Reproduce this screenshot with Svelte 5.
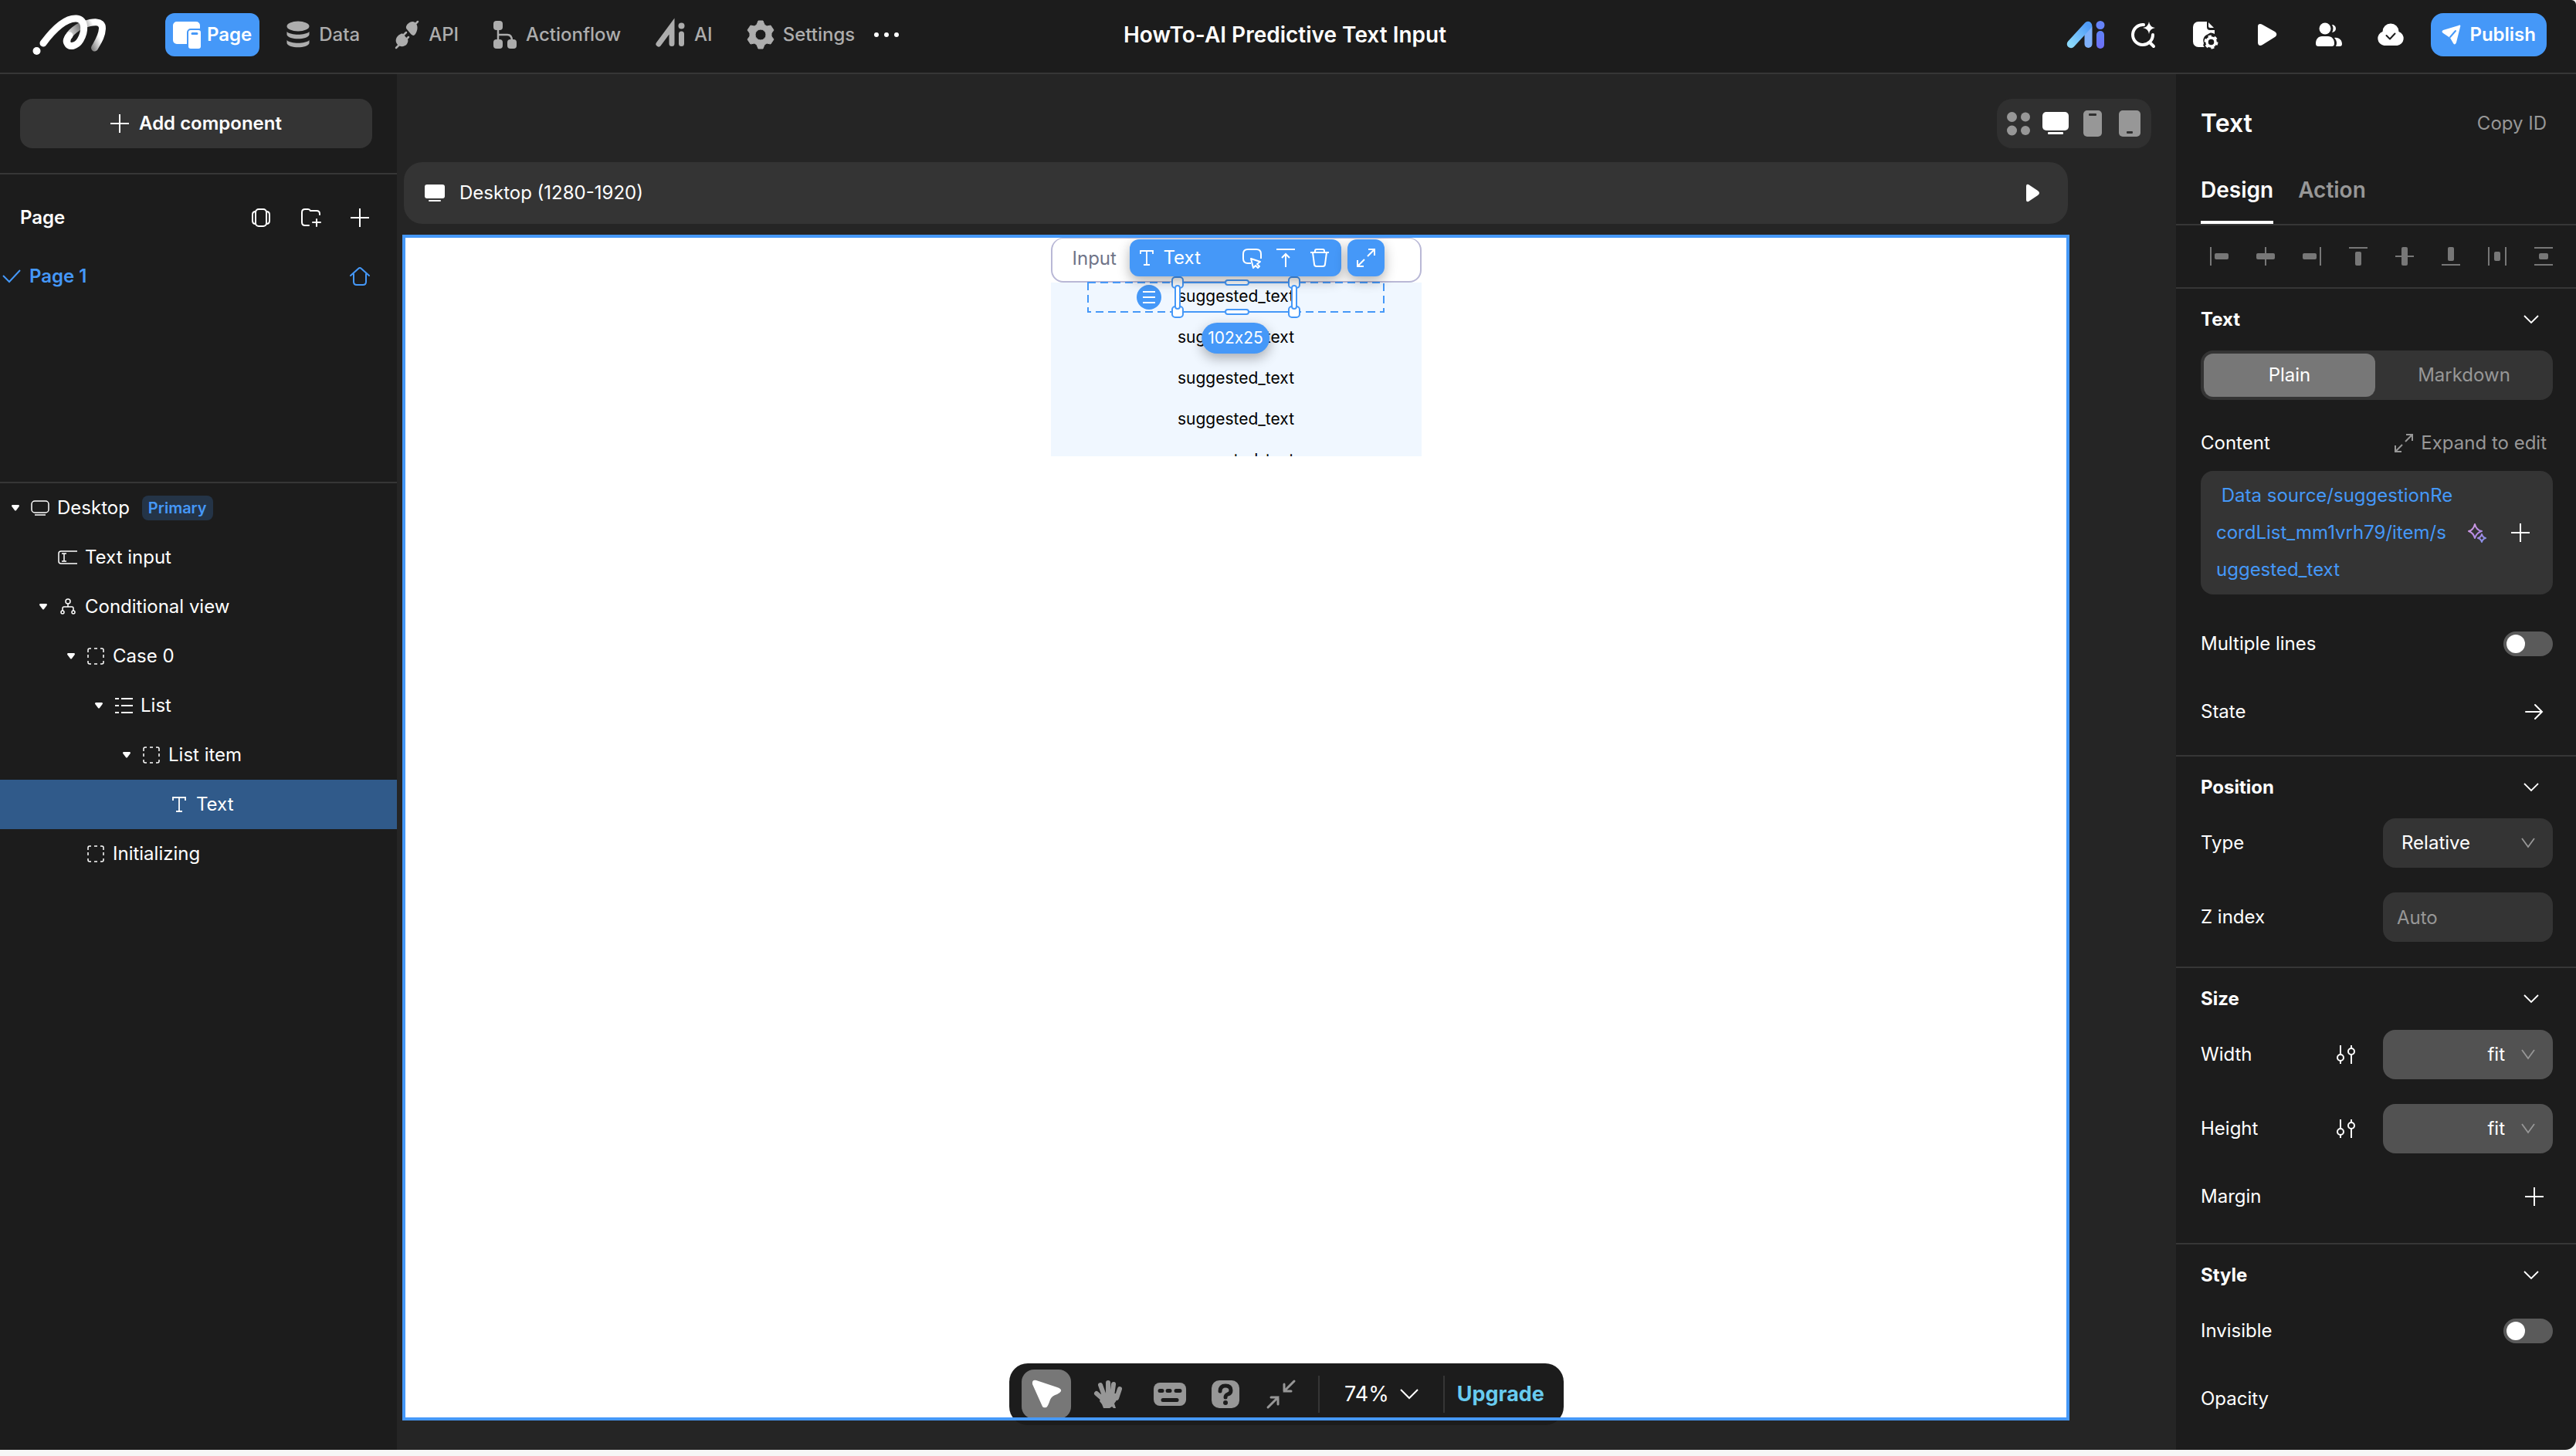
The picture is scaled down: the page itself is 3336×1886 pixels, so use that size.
<script lang="ts">
  type TreeRow = {
    label: string;
    icon: string;
    depth: number;
    open?: boolean;
    tag?: string;
    selected?: boolean;
  };

  const nav = [
    { label: 'Page', icon: 'page', active: true },
    { label: 'Data', icon: 'data' },
    { label: 'API', icon: 'plug' },
    { label: 'Actionflow', icon: 'flow' },
    { label: 'AI', icon: 'ai' },
    { label: 'Settings', icon: 'gear' },
  ];

  const actions = [
    { label: 'AI assistant', icon: 'aiColor' },
    { label: 'Smart search', icon: 'search' },
    { label: 'Page settings', icon: 'docGear' },
    { label: 'Preview', icon: 'play' },
    { label: 'Members', icon: 'users' },
    { label: 'Saved', icon: 'cloud' },
  ];

  const devices = [
    { label: 'All', icon: 'grid' },
    { label: 'Desktop', icon: 'monitor', active: true },
    { label: 'Phone', icon: 'phone' },
    { label: 'Tablet', icon: 'tablet' },
  ];

  const tree: TreeRow[] = [
    { label: 'Desktop', icon: 'screen', depth: 0, open: true, tag: 'Primary' },
    { label: 'Text input', icon: 'field', depth: 1 },
    { label: 'Conditional view', icon: 'branch', depth: 1, open: true },
    { label: 'Case 0', icon: 'box', depth: 2, open: true },
    { label: 'List', icon: 'list', depth: 3, open: true },
    { label: 'List item', icon: 'box', depth: 4, open: true },
    { label: 'Text', icon: 'type', depth: 5, selected: true },
    { label: 'Initializing', icon: 'box', depth: 2 },
  ];

  const aligns = [
    { label: 'Align left', d: 'M1 0v24', r: [6, 8, 18, 8] },
    { label: 'Align centre', d: 'M12 0v24', r: [0, 8, 24, 8] },
    { label: 'Align right', d: 'M23 0v24', r: [0, 8, 18, 8] },
    { label: 'Align top', d: 'M0 1h24', r: [8, 6, 8, 18] },
    { label: 'Align middle', d: 'M0 12h24', r: [8, 0, 8, 24] },
    { label: 'Align bottom', d: 'M0 23h24', r: [8, 0, 8, 18] },
    { label: 'Distribute horizontally', d: 'M1 0v24M23 0v24', r: [8, 6, 8, 12] },
    { label: 'Distribute vertically', d: 'M0 1h24M0 23h24', r: [6, 8, 12, 8] },
  ];

  const suggestions = Array(5).fill('suggested_text');
  const binding = ' Data source/suggestionRe\ncordList_mm1vrh79/item/s\nuggested_text';

  let multiline = $state(false);
  let invisible = $state(false);
</script>

{#snippet icon(name: string)}
  {#if name === 'page'}
    <svg width="36" height="36" viewBox="0 0 36 36" fill="currentColor">
      <path d="M5 1h25a5 5 0 0 1 5 5v4H23a5 5 0 0 0-5 5v15H5a5 5 0 0 1-5-5V6a5 5 0 0 1 5-5Z" />
      <path fill-rule="evenodd" d="M23 12h10a3 3 0 0 1 3 3v18a3 3 0 0 1-3 3H23a3 3 0 0 1-3-3V15a3 3 0 0 1 3-3Zm2 3a1 1 0 0 0 0 3h6a1 1 0 0 0 0-3Z" />
    </svg>
  {:else if name === 'data'}
    <svg width="30" height="36" viewBox="0 0 30 36" fill="currentColor">
      <ellipse cx="15" cy="7" rx="14.500" ry="6.500" />
      <path d="M.5 14c5 5 24 5 29 0v4c-2 7-27 7-29 0ZM.5 25c5 5 24 5 29 0v4c-2 7-27 7-29 0Z" />
    </svg>
  {:else if name === 'plug'}
    <svg width="32" height="36" viewBox="0 0 32 36" fill="currentColor">
      <path d="M26 5l4-4" stroke="currentColor" stroke-width="2.500" stroke-linecap="round" />
      <path d="M17 4c4-4 9-4 11 0 3 4 1 10-1 13-2 3-4 2-6 0l-5-6c-2-2-1-5 1-7Z" />
      <path d="M2 35l4-4M11 19l4-4M15 24l3-3" stroke="currentColor" stroke-width="2.500" stroke-linecap="round" />
      <path d="M8 17c2-1 3 0 4 1l5 6c1 2 0 4-1 6-3 4-9 4-12 1-4-4-3-11 4-14Z" />
    </svg>
  {:else if name === 'flow'}
    <svg width="30" height="36" viewBox="0 0 30 36" fill="currentColor">
      <rect width="12" height="12" rx="4" />
      <rect y="24" width="12" height="12" rx="4" />
      <rect x="18" y="24" width="12" height="12" rx="4" />
      <path d="M6 10v16M6 18h12q6 0 6 8" fill="none" stroke="currentColor" stroke-width="2.500" />
    </svg>
  {:else if name === 'ai'}
    <svg width="38" height="32" viewBox="0 0 38 32" fill="none" stroke="currentColor" stroke-width="7" stroke-linecap="round">
      <path d="M4 28 21 5v22.500M33.500 15v12.500" />
      <circle cx="33.500" cy="4.500" r="4" fill="currentColor" stroke="none" />
    </svg>
  {:else if name === 'gear'}
    <svg width="34" height="38" viewBox="0 0 34 38">
      <path fill="currentColor" fill-rule="evenodd" d="M14 1h6l2 5 3 2 5-1 4 6-3 4v4l3 4-4 6-5-1-3 2-2 5h-6l-2-5-3-2-5 1-4-6 3-4v-4l-3-4 4-6 5 1 3-2Zm3 11a7 7 0 1 0 0 14 7 7 0 0 0 0-14Z" stroke="currentColor" stroke-linejoin="round" />
    </svg>
  {:else if name === 'aiColor'}
    <svg width="50" height="36" viewBox="0 0 50 36" fill="none" stroke-linecap="round">
      <defs>
        <linearGradient id="ai-a" x1="0" y1="1" x2="1" y2="0">
          <stop stop-color="#8ad8fb" /><stop offset="1" stop-color="#4f9bf8" />
        </linearGradient>
        <linearGradient id="ai-b" x1="0" y1="0" x2="0" y2="1">
          <stop stop-color="#5f83f8" /><stop offset="1" stop-color="#6f6ef6" />
        </linearGradient>
      </defs>
      <path d="M28.500 8v22" stroke="#7fb0fa" stroke-width="10" />
      <path d="M6 30 28 6" stroke="url(#ai-a)" stroke-width="10.500" />
      <rect x="39" y="13" width="10" height="23" rx="5" fill="url(#ai-b)" />
      <circle cx="44" cy="5.500" r="5.500" fill="#6683f8" />
    </svg>
  {:else if name === 'search'}
    <svg width="32" height="34" viewBox="0 0 32 34" fill="none" stroke="currentColor" stroke-width="4" stroke-linecap="round">
      <path d="M16 4A13 13 0 1 0 28 17M24 27l5 5" />
      <path d="M23 0q1 7 8 8-7 1-8 8-1-7-8-8 7-1 8-8Z" fill="currentColor" stroke="none" />
    </svg>
  {:else if name === 'docGear'}
    <svg width="32" height="36" viewBox="0 0 32 36" fill="currentColor">
      <path d="M7 1h11v7a4 4 0 0 0 4 4h6v5c-3-2-6-2-8 0-6 2-8 7-6 12-1 2-1 4 1 5H7a7 7 0 0 1-7-7V8a7 7 0 0 1 7-7Z" />
      <path d="M20 2l7 7h-5a2 2 0 0 1-2-2Z" />
      <circle cx="23.500" cy="27.500" r="5.500" fill="none" stroke="currentColor" stroke-width="3.500" />
      <circle cx="23.500" cy="27.500" r="7.500" fill="none" stroke="currentColor" stroke-width="3" stroke-dasharray="4 3.850" />
    </svg>
  {:else if name === 'play'}
    <svg width="26" height="30" viewBox="0 0 26 30" fill="currentColor">
      <path d="M1 4C1 1 4 0 7 2l16 9c3 2 3 5 0 7L7 28c-3 2-6 1-6-3Z" />
    </svg>
  {:else if name === 'users'}
    <svg width="36" height="32" viewBox="0 0 36 32" fill="currentColor">
      <circle cx="13" cy="8" r="7.500" />
      <path d="M9 18h8c5 0 8 4 8 9 0 3-1 4-4 4H5c-3 0-4-1-4-4 0-5 3-9 8-9Z" />
      <path d="M22 3a5 5 0 1 1 0 10q3-5 0-10ZM25 20c6-1 10 3 10 8 0 2-1 3-3 3h-5c2-4 1-8-2-11Z" />
    </svg>
  {:else if name === 'cloud'}
    <svg width="36" height="30" viewBox="0 0 36 30">
      <path fill="currentColor" d="M7.500 11a10.500 10.500 0 0 1 21 0A9.300 9.300 0 0 1 26.500 29h-17A9.300 9.300 0 0 1 7.500 11Z" />
      <path d="M12.500 16l4.500 4.500 6.500-7" fill="none" stroke="#1c1c1c" stroke-width="2" stroke-linecap="round" stroke-linejoin="round" />
    </svg>
  {:else if name === 'send'}
    <svg width="26" height="26" viewBox="0 0 26 26">
      <path fill="currentColor" d="M2 7 22 1c2-1 3 0 2 2l-5 20c-1 3-3 3-4 1l-4-7L2 11c-2-1-2-3 0-4Z" />
      <path d="M11 16l7-8" stroke="#4598f8" stroke-width="2" stroke-linecap="round" />
    </svg>
  {:else if name === 'grid'}
    <svg width="30" height="30" viewBox="0 0 30 30" fill="currentColor">
      <circle cx="6.500" cy="6.500" r="6.500" /><circle cx="24" cy="6.500" r="6" />
      <circle cx="6.500" cy="24" r="6.500" /><circle cx="24" cy="24" r="6" />
    </svg>
  {:else if name === 'monitor'}
    <svg width="34" height="30" viewBox="0 0 34 30" fill="currentColor">
      <rect width="34" height="24" rx="5" /><rect x="7" y="26" width="20" height="3" rx="1" />
    </svg>
  {:else if name === 'phone'}
    <svg width="24" height="34" viewBox="0 0 24 34">
      <rect width="24" height="34" rx="5" fill="currentColor" /><rect x="7" y="4" width="10" height="3" rx="1" fill="#303030" />
    </svg>
  {:else if name === 'tablet'}
    <svg width="28" height="34" viewBox="0 0 28 34">
      <rect width="28" height="34" rx="5" fill="currentColor" /><rect x="10" y="27" width="8" height="3" rx="1" fill="#303030" />
    </svg>
  {:else if name === 'screen'}
    <svg width="24" height="24" viewBox="0 0 24 24" fill="none" stroke="currentColor" stroke-width="1.500">
      <rect x="1" y="3" width="22" height="15" rx="4" /><path d="M5 21h14" />
    </svg>
  {:else if name === 'field'}
    <svg width="24" height="24" viewBox="0 0 24 24" fill="none" stroke="currentColor" stroke-width="1.500">
      <path d="M24 4H3a3 3 0 0 0-3 3v10a3 3 0 0 0 3 3h21M4 7h6M4 17h6M7 7v10" />
    </svg>
  {:else if name === 'branch'}
    <svg width="24" height="24" viewBox="0 0 24 24" fill="none" stroke="currentColor" stroke-width="1.500">
      <circle cx="12" cy="5" r="3" /><circle cx="5" cy="19" r="2" /><circle cx="19" cy="19" r="2" />
      <path d="M12 8v4M5 17v-3q0-2 2-2h10q2 0 2 2v3" />
    </svg>
  {:else if name === 'box'}
    <svg width="24" height="24" viewBox="0 0 24 24" fill="none" stroke="currentColor" stroke-width="1.500">
      <path d="M2 7V4q0-2 2-2h2M10 2h4M18 2h2q2 0 2 2v3M22 10v4M22 18v2q0 2-2 2h-2M14 22h-4M6 22H4q-2 0-2-2v-2M2 14v-4" />
    </svg>
  {:else if name === 'list'}
    <svg width="24" height="24" viewBox="0 0 24 24" fill="none" stroke="currentColor" stroke-width="2">
      <path d="M1 3h5M9 3h15M1 12h5M9 12h15M1 21h5M9 21h15" />
    </svg>
  {:else if name === 'type'}
    <svg width="24" height="24" viewBox="0 0 24 24" fill="none" stroke="currentColor" stroke-width="1.800">
      <path d="M4 7V3h16v4M12 3v18M8 21h8" />
    </svg>
  {:else if name === 'plus'}
    <svg width="24" height="24" viewBox="0 0 24 24" stroke="currentColor" stroke-width="2">
      <path d="M0 12h24M12 0v24" />
    </svg>
  {:else if name === 'expand'}
    <svg width="24" height="24" viewBox="0 0 24 24" fill="none" stroke="currentColor" stroke-width="2">
      <path d="M15 1h8v8M23 1l-9 9M9 23H1v-8M1 23l9-9" />
    </svg>
  {:else if name === 'chevron'}
    <svg width="20" height="12" viewBox="0 0 20 12" fill="none" stroke="currentColor" stroke-width="1.800">
      <path d="M1 1l9 9 9-9" />
    </svg>
  {:else if name === 'caret'}
    <svg width="16" height="12" viewBox="0 0 16 12" fill="none" stroke="currentColor" stroke-width="1.800">
      <path d="M0 0l8 11 8-11" />
    </svg>
  {:else if name === 'sliders'}
    <svg width="24" height="24" viewBox="0 0 24 24" fill="none" stroke="currentColor" stroke-width="2">
      <circle cx="5" cy="16" r="4" /><circle cx="19" cy="8" r="4" />
      <path d="M5 0v12M5 20v4M19 0v4M19 12v12" />
    </svg>
  {/if}
{/snippet}

<div class="app">
  <header class="topbar">
    <div class="topbar__left">
      <svg class="logo" width="120" height="70" viewBox="0 0 120 70" fill="none" stroke="#fff" stroke-width="9" stroke-linecap="round">
        <defs>
          <linearGradient id="ribbon" gradientUnits="userSpaceOnUse" x1="56" y1="40" x2="98" y2="20">
            <stop stop-color="#fff" /><stop offset=".5" stop-color="#777" /><stop offset=".85" stop-color="#fff" />
          </linearGradient>
        </defs>
        <path stroke="url(#ribbon)" d="M57 43C57 36 66 27 78 22 90 18 103 16 102.500 27 102 37 97 44 92.500 52" />
        <path d="M26 46C40 27 56 13 69 14 82 15 80 32 74 42 69 50 60 52 57 46 55 43 57 39 60 36" />
        <circle cx="17.500" cy="56" r="5" fill="#fff" stroke="none" />
      </svg>
      <nav class="nav" aria-label="Workspace">
        {#each nav as item}
          <button type="button" class="nav__item" class:nav__item--active={item.active}>
            {@render icon(item.icon)}
            {item.label}
          </button>
        {/each}
        <button type="button" class="nav__more" aria-label="More"><i></i><i></i><i></i></button>
      </nav>
    </div>
    <h1 class="topbar__title">HowTo-AI Predictive Text Input</h1>
    <div class="topbar__right">
      <div class="actions">
        {#each actions as action}
          <button type="button" class="actions__btn" aria-label={action.label}>{@render icon(action.icon)}</button>
        {/each}
      </div>
      <button type="button" class="publish">{@render icon('send')}Publish</button>
    </div>
  </header>

  <div class="body">
    <aside class="side">
      <div class="side__add">
        <button type="button" class="add">{@render icon('plus')}Add component</button>
      </div>

      <section class="pages">
        <div class="pages__head">
          <h2>Page</h2>
          <button type="button" class="tool" aria-label="Page carousel">
            <svg width="24" height="24" viewBox="0 0 24 24" fill="none" stroke="currentColor" stroke-width="2">
              <rect x="5" y="1" width="14" height="22" rx="4" />
              <path d="M5 4Q1 4 1 8v8q0 4 4 4M19 4q4 0 4 4v8q0 4-4 4" />
            </svg>
          </button>
          <button type="button" class="tool" aria-label="New folder">
            <svg width="26" height="24" viewBox="0 0 26 24" fill="none" stroke="currentColor" stroke-width="2" stroke-linecap="round">
              <path d="M10 22H5q-4 0-4-4V5q0-4 4-4h4q2 0 3 2h8q4 0 4 4v1M20 14v9M15 18h10" />
            </svg>
          </button>
          <button type="button" class="tool" aria-label="New page">{@render icon('plus')}</button>
        </div>
        <a class="pages__item" href="#page-1">
          <svg width="24" height="18" viewBox="0 0 24 18" fill="none" stroke="currentColor" stroke-width="2">
            <path d="M0 8l8 8L22 1" />
          </svg>
          <span>Page 1</span>
          <svg width="26" height="24" viewBox="0 0 26 24" fill="none" stroke="currentColor" stroke-width="2" stroke-linecap="round">
            <path d="M1 11 11 2q2-2 4 0l10 9M5 9v10q0 4 4 4h8q4 0 4-4V9" />
          </svg>
        </a>
      </section>

      <ul class="tree">
        {#each tree as row}
          <li>
            <button
              type="button"
              class="tree__row"
              class:tree__row--selected={row.selected}
              style="padding-left: {row.depth * 36 + 4}px"
            >
              <span class="tree__caret">
                {#if row.open}
                  <svg width="10" height="8" viewBox="0 0 10 8" fill="currentColor"><path d="M1 0h8q2 1 0 3L6 7q-1 1-2 0L1 3q-2-2 0-3Z" /></svg>
                {/if}
              </span>
              {@render icon(row.icon)}
              {row.label}
              {#if row.tag}<span class="tree__tag">{row.tag}</span>{/if}
            </button>
          </li>
        {/each}
      </ul>
    </aside>

    <main class="stage">
      <div class="devices" role="group" aria-label="Breakpoint">
        {#each devices as device}
          <button type="button" class="devices__btn" class:devices__btn--active={device.active} aria-label={device.label}>
            {@render icon(device.icon)}
          </button>
        {/each}
      </div>

      <div class="frame-bar">
        <svg width="26" height="24" viewBox="0 0 26 24" fill="currentColor">
          <rect y="1" width="26" height="18" rx="3" /><rect x="5" y="21" width="16" height="2" rx="1" />
        </svg>
        <span>Desktop (1280-1920)</span>
        <button type="button" class="frame-bar__play" aria-label="Run">
          <svg width="20" height="24" viewBox="0 0 20 24" fill="currentColor">
            <path d="M2 3q0-3 3-2l12 8q4 3 0 6L5 23q-3 1-3-2Z" />
          </svg>
        </button>
      </div>

      <div class="frame">
        <div class="artboard">
          <input class="artboard__input" type="text" placeholder="Input" aria-label="Input" />
          <ul class="artboard__list">
            {#each suggestions as text}
              <li>{text}</li>
            {/each}
          </ul>

          <div class="pick">
            <svg class="pick__dash" aria-hidden="true">
              <rect x="1" y="1" width="383" height="38" fill="none" stroke="#4598f8" stroke-width="2" stroke-dasharray="10 6" />
            </svg>
            <button type="button" class="pick__grip" aria-label="Move">
              <svg width="16" height="16" viewBox="0 0 16 16" stroke="currentColor" stroke-width="2"><path d="M0 1h16M0 8h16M0 15h16" /></svg>
            </button>
            <div class="pick__box">
              <i class="bar bar--t"></i><i class="bar bar--b"></i>
              <i class="bar bar--l"></i><i class="bar bar--r"></i>
              <i class="knob knob--tl"></i><i class="knob knob--tr"></i>
              <i class="knob knob--bl"></i><i class="knob knob--br"></i>
            </div>
            <span class="pick__size">102x25</span>
            <div class="pick__tools">
              <div class="pick__bar">
                {@render icon('type')}
                <span>Text</span>
                <button type="button" class="tool" aria-label="Add interaction">
                  <svg width="26" height="26" viewBox="0 0 26 26" fill="none" stroke="currentColor" stroke-width="2" stroke-linejoin="round">
                    <path d="M11 19H7q-6 0-6-6V7q0-6 6-6h11q6 0 6 6v6M11 13l12 4-4 3 3 3-2 2-3-3-3 3Z" />
                  </svg>
                </button>
                <button type="button" class="tool" aria-label="Select parent">
                  <svg width="24" height="24" viewBox="0 0 24 24" fill="none" stroke="currentColor" stroke-width="2">
                    <path d="M0 1h24M12 24V8M7 12l5-5 5 5" />
                  </svg>
                </button>
                <button type="button" class="tool" aria-label="Delete">
                  <svg width="24" height="24" viewBox="0 0 24 24" fill="none" stroke="currentColor" stroke-width="2">
                    <path d="M0 5h24M6 5V3q0-2 2-2h8q2 0 2 2v2M3 5l2 15q0 3 3 3h8q3 0 3-3l2-15" />
                  </svg>
                </button>
              </div>
              <button type="button" class="pick__expand" aria-label="Expand">{@render icon('expand')}</button>
            </div>
          </div>
        </div>
      </div>

      <div class="dock">
        <div class="dock__group dock__group--wide">
          <button type="button" class="dock__btn dock__btn--active" aria-label="Select">
            <svg width="38" height="38" viewBox="0 0 38 38" fill="currentColor">
              <path d="M6 1l27 9q6 2 5 5-1 2-5 4-7 2-9 7-3 9-5 10-4 1-5-1L1 6Q0 0 6 1Z" />
            </svg>
          </button>
          <button type="button" class="dock__btn" aria-label="Pan">
            <svg width="36" height="36" viewBox="0 0 36 36" fill="none" stroke="currentColor" stroke-width="6" stroke-linecap="round">
              <path d="M3 17l8 7M8 6l5 14M18 3v16M25 5l-2 15M33 11l-4 12" />
              <path d="M10 17h19q2 8-3 13l2 6h-3l-2-2-3 2h-8q-1-5-5-9Z" fill="currentColor" stroke="none" />
            </svg>
          </button>
          <button type="button" class="dock__btn" aria-label="Shortcuts">
            <svg width="42" height="30" viewBox="0 0 42 30">
              <rect width="42" height="30" rx="8" fill="currentColor" />
              <path d="M8 10.500h3M18 10.500h3M29 10.500h5M12 22.500h18" stroke="#1c1c1c" stroke-width="5" stroke-linecap="round" />
            </svg>
          </button>
        </div>
        <div class="dock__group">
          <button type="button" class="dock__btn" aria-label="Help">
            <svg width="36" height="36" viewBox="0 0 36 36">
              <rect width="36" height="36" rx="10" fill="currentColor" />
              <path d="M11 14q0-7 7-7t7 6q0 4-4 5-3 1-3 4" fill="none" stroke="#1c1c1c" stroke-width="5" stroke-linecap="round" />
              <circle cx="18" cy="29" r="3" fill="#1c1c1c" />
            </svg>
          </button>
          <button type="button" class="dock__btn" aria-label="Fit to screen">
            <svg width="36" height="36" viewBox="0 0 36 36" fill="none" stroke="currentColor" stroke-width="3" stroke-linecap="round">
              <path d="M35 1 22 14M22 5v9h9M1 35l13-13M5 22h9v9" />
            </svg>
          </button>
        </div>
        <div class="dock__zoom">
          <button type="button">
            74%
            <svg width="24" height="14" viewBox="0 0 24 14" fill="none" stroke="currentColor" stroke-width="2"><path d="M1 1l11 11L23 1" /></svg>
          </button>
        </div>
        <a class="dock__upgrade" href="#upgrade">Upgrade</a>
      </div>
    </main>

    <aside class="props">
      <div class="props__title">
        <h2>Text</h2>
        <button type="button">Copy ID</button>
      </div>
      <div class="tabs" role="tablist">
        <button type="button" role="tab" aria-selected="true" class="tabs__tab tabs__tab--active">Design</button>
        <button type="button" role="tab" aria-selected="false" class="tabs__tab">Action</button>
      </div>
      <div class="aligns">
        {#each aligns as a}
          <button type="button" class="tool" aria-label={a.label}>
            <svg width="24" height="24" viewBox="0 0 24 24">
              <path d={a.d} stroke="currentColor" stroke-width="2" />
              <rect x={a.r[0]} y={a.r[1]} width={a.r[2]} height={a.r[3]} rx="2" fill="currentColor" />
            </svg>
          </button>
        {/each}
      </div>

      <section class="group">
        <h3 class="group__head">Text<button type="button" class="tool" aria-label="Collapse Text">{@render icon('chevron')}</button></h3>
        <div class="segmented">
          <button type="button" class="segmented__opt segmented__opt--active">Plain</button>
          <button type="button" class="segmented__opt">Markdown</button>
        </div>
        <div class="content-head">
          <span>Content</span>
          <button type="button" class="content-head__expand">{@render icon('expand')}Expand to edit</button>
        </div>
        <div class="binding">
          <span class="binding__text">{binding}</span>
          <button type="button" class="tool" aria-label="Generate with AI">
            <svg width="24" height="26" viewBox="0 0 24 26" fill="none" stroke="url(#spark)" stroke-width="2" stroke-linejoin="round">
              <defs>
                <linearGradient id="spark" x1="0" y1="0" x2="1" y2="1">
                  <stop stop-color="#d9a0e0" /><stop offset=".5" stop-color="#b589e6" /><stop offset="1" stop-color="#7f92e8" />
                </linearGradient>
              </defs>
              <path d="M9 1q2 8 9 9-7 2-9 9-2-7-8-9 6-1 8-9ZM18 14q1 4 5 5-4 1-5 5-1-4-5-5 4-1 5-5Z" />
            </svg>
          </button>
          <button type="button" class="tool" aria-label="Add binding">{@render icon('plus')}</button>
        </div>
        <div class="rows rows--tight">
          <label class="row">Multiple lines<input type="checkbox" role="switch" class="switch" bind:checked={multiline} /></label>
          <div class="row">
            State
            <button type="button" class="tool tool--end" aria-label="Open state">
              <svg width="24" height="24" viewBox="0 0 24 24" fill="none" stroke="currentColor" stroke-width="2" stroke-linecap="round"><path d="M1 12h21M13 3l9 9-9 9" /></svg>
            </button>
          </div>
        </div>
      </section>

      <section class="group">
        <h3 class="group__head">Position<button type="button" class="tool" aria-label="Collapse Position">{@render icon('chevron')}</button></h3>
        <div class="rows">
          <div class="row">
            <label for="pos-type">Type</label>
            <div class="select">
              <select id="pos-type"><option>Relative</option><option>Absolute</option></select>
              {@render icon('caret')}
            </div>
          </div>
          <div class="row">
            <label for="z-index">Z index</label>
            <input id="z-index" class="input" type="text" placeholder="Auto" />
          </div>
        </div>
      </section>

      <section class="group">
        <h3 class="group__head">Size<button type="button" class="tool" aria-label="Collapse Size">{@render icon('chevron')}</button></h3>
        <div class="rows">
          {#each ['Width', 'Height'] as dim}
            <div class="row">
              <label for="size-{dim}">{dim}</label>
              <button type="button" class="tool tool--range" aria-label="{dim} limits">{@render icon('sliders')}</button>
              <div class="select select--fit">
                <select id="size-{dim}"><option>fit</option><option>px</option></select>
                {@render icon('caret')}
              </div>
            </div>
          {/each}
        </div>
        <div class="row row--margin">
          Margin
          <button type="button" class="tool tool--end" aria-label="Add margin">{@render icon('plus')}</button>
        </div>
      </section>

      <section class="group">
        <h3 class="group__head">Style<button type="button" class="tool" aria-label="Collapse Style">{@render icon('chevron')}</button></h3>
        <div class="rows rows--tight">
          <label class="row">Invisible<input type="checkbox" role="switch" class="switch" bind:checked={invisible} /></label>
          <div class="row">Opacity</div>
        </div>
      </section>
    </aside>
  </div>
</div>

<style>
  :global(body) {
    background: #f6f6f6;
  }

  .app {
    --panel: #1c1c1c;
    --raised: #343434;
    --rule: #363636;
    --muted: #979797;
    --blue: #4598f8;
    box-sizing: border-box;
    display: flex;
    flex-direction: column;
    min-height: 100vh;
    padding-bottom: 8px;
    font: 400 24px/32px Inter, "Liberation Sans", sans-serif;
    color: #fff;
  }

  .app :global(*) {
    box-sizing: border-box;
  }

  .app svg {
    display: block;
    flex: none;
    overflow: visible;
  }

  button,
  input,
  select {
    margin: 0;
    padding: 0;
    border: 0;
    background: none;
    color: inherit;
    font: inherit;
  }

  button {
    cursor: pointer;
  }

  h1,
  h2,
  h3,
  ul {
    margin: 0;
    padding: 0;
    list-style: none;
  }

  h1,
  h2,
  h3 {
    font-size: 24px;
    font-weight: 600;
  }

  a {
    color: inherit;
    text-decoration: none;
  }

  .tool {
    display: grid;
    flex: none;
    place-items: center;
    width: 24px;
    height: 24px;
  }

  /* top bar */
  .topbar {
    display: grid;
    grid-template-columns: 1fr auto 1fr;
    align-items: center;
    height: 96px;
    padding: 0 38px 4px 30px;
    border-bottom: 2px solid var(--rule);
    border-top-right-radius: 6px;
    background: var(--panel);
  }

  .topbar__left,
  .topbar__right,
  .nav,
  .actions {
    display: flex;
    align-items: center;
  }

  .topbar__title {
    font-size: 28px;
  }

  .logo {
    margin-right: 64px;
  }

  .topbar__right {
    justify-content: flex-end;
    gap: 32px;
  }

  .nav {
    gap: 25px;
  }

  .nav__item {
    display: flex;
    align-items: center;
    gap: 12px;
    height: 56px;
    padding: 0 10px;
    border-radius: 12px;
    color: #adadad;
    font-weight: 500;
  }

  .nav__item--active {
    gap: 8px;
    background: var(--blue);
    color: #fff;
    font-weight: 600;
  }

  .nav__more {
    display: flex;
    gap: 7px;
    margin-left: -10px;
  }

  .nav__more i {
    width: 6px;
    height: 6px;
    border-radius: 50%;
    background: #fff;
  }

  .actions {
    gap: 40px;
  }

  .actions__btn {
    display: grid;
    place-items: center;
    width: 40px;
    height: 56px;
  }

  .publish {
    display: flex;
    align-items: center;
    gap: 10px;
    height: 56px;
    padding: 0 14px;
    border-radius: 16px;
    background: var(--blue);
    font-weight: 600;
  }

  .body {
    display: grid;
    grid-template-columns: 514px minmax(0, 1fr) 518px;
    flex: 1;
  }

  /* left panel */
  .side {
    background: var(--panel);
  }

  .side__add {
    padding: 32px 32px 32px 26px;
    border-bottom: 2px solid var(--rule);
  }

  .add {
    display: flex;
    align-items: center;
    justify-content: center;
    gap: 13px;
    width: 100%;
    height: 64px;
    border-radius: 16px;
    background: var(--raised);
    font-weight: 600;
  }

  .pages {
    height: 400px;
    padding-top: 32px;
    border-bottom: 2px solid var(--rule);
  }

  .pages__head {
    display: flex;
    align-items: center;
    gap: 40px;
    height: 48px;
    padding: 0 36px 0 26px;
  }

  .pages__head h2 {
    flex: 1;
  }

  .pages__item {
    display: flex;
    align-items: center;
    gap: 10px;
    height: 56px;
    margin-top: 24px;
    padding: 0 35px 0 4px;
    color: var(--blue);
    font-weight: 600;
  }

  .pages__item span {
    flex: 1;
  }

  .tree__row {
    display: flex;
    align-items: center;
    gap: 10px;
    width: 100%;
    height: 64px;
    text-align: left;
  }

  .tree__row--selected {
    background: #305a8a;
  }

  .tree__caret {
    display: grid;
    place-items: center;
    width: 32px;
    margin-right: -6px;
  }

  .tree__tag {
    margin-left: 6px;
    padding: 0 8px;
    border-radius: 8px;
    background: #243447;
    color: var(--blue);
    font-size: 20px;
    font-weight: 600;
  }

  /* canvas */
  .stage {
    position: relative;
    display: flex;
    flex-direction: column;
    padding: 32px 138px 38px 7px;
    background: #252525;
  }

  .devices {
    display: flex;
    align-self: flex-end;
    height: 64px;
    margin: 0 -106px 18px 0;
    padding: 0 4px;
    border-radius: 20px;
    background: #303030;
  }

  .devices__btn {
    display: grid;
    place-items: center;
    width: 48px;
    color: var(--muted);
  }

  .devices__btn--active {
    color: #fff;
  }

  .frame-bar {
    display: flex;
    align-items: center;
    gap: 19px;
    height: 80px;
    margin: 0 2px 14px;
    padding: 0 36px 0 27px;
    border-radius: 24px;
    background: var(--raised);
  }

  .frame-bar__play {
    margin-left: auto;
  }

  .frame {
    position: relative;
    flex: 1;
    padding: 4px;
    background: #fff;
  }

  /* the outline stays above the floating dock */
  .frame::after {
    content: "";
    position: absolute;
    inset: 0;
    z-index: 2;
    border: 4px solid var(--blue);
    pointer-events: none;
  }

  .artboard {
    position: relative;
    width: 480px;
    margin: 0 auto;
    color: #000;
  }

  .artboard__input {
    display: block;
    width: 100%;
    height: 58px;
    padding: 0 26px 4px;
    border: 2px solid #b9b8d6;
    border-top-width: 1px;
    border-radius: 16px;
  }

  .artboard__input::placeholder {
    color: #6f7488;
    opacity: 1;
  }

  .artboard__list {
    display: flex;
    flex-direction: column;
    gap: 15px;
    height: 225px;
    overflow: hidden;
    background: #f0f7ff;
    font-size: 21px;
    text-align: center;
  }

  .artboard__list li {
    flex: none;
    height: 38px;
    line-height: 36px;
  }

  .pick {
    position: absolute;
    top: 57px;
    left: 47px;
    width: 385px;
    height: 40px;
    color: #fff;
  }

  .pick__dash {
    width: 100%;
    height: 100%;
  }

  .pick__grip {
    position: absolute;
    top: 4px;
    left: 64px;
    display: grid;
    place-items: center;
    width: 32px;
    height: 32px;
    border-radius: 50%;
    background: var(--blue);
  }

  .pick__box {
    position: absolute;
    inset: 0 116px;
    border: 2px solid var(--blue);
  }

  .bar,
  .knob {
    position: absolute;
    border: 2px solid var(--blue);
    border-radius: 5px;
    background: #fff;
  }

  .bar--t,
  .bar--b {
    left: 60px;
    width: 32px;
    height: 8px;
  }

  .bar--l,
  .bar--r {
    top: 2px;
    z-index: 1;
    width: 8px;
    height: 32px;
  }

  .bar--t { top: -5px; }
  .bar--b { bottom: -5px; }
  .bar--l { left: -5px; }
  .bar--r { right: -5px; }

  .knob {
    width: 16px;
    height: 16px;
  }

  .knob--tl { top: -9px; left: -9px; }
  .knob--tr { top: -9px; right: -9px; }
  .knob--bl { bottom: -9px; left: -9px; }
  .knob--br { right: -9px; bottom: -9px; }

  /* calt would turn the x between digits into a multiplication sign */
  .pick__size {
    position: absolute;
    top: 53px;
    left: 50%;
    padding: 0 8px;
    border-radius: 20px;
    background: var(--blue);
    box-shadow: 0 6px 16px rgb(0 0 0 / 30%);
    font-size: 21px;
    font-feature-settings: "calt" 0;
    line-height: 40px;
    transform: translateX(-50%);
  }

  .pick__tools {
    position: absolute;
    right: 0;
    bottom: 47px;
    display: flex;
    gap: 8px;
  }

  .pick__bar,
  .pick__expand {
    display: flex;
    align-items: center;
    height: 48px;
    border-radius: 12px;
    background: var(--blue);
    box-shadow: 0 6px 16px rgb(0 0 0 / 30%);
  }

  .pick__bar {
    gap: 20px;
    width: 274px;
    padding: 0 16px 0 10px;
  }

  .pick__bar span {
    flex: 1;
    margin-left: -10px;
  }

  .pick__expand {
    justify-content: center;
    width: 48px;
  }

  /* floating dock */
  .dock {
    position: absolute;
    bottom: 32px;
    left: 50%;
    z-index: 1;
    display: flex;
    align-items: center;
    height: 80px;
    padding: 0 25px 0 16px;
    border-radius: 24px;
    background: var(--panel);
    font-size: 27px;
    transform: translateX(-50%);
  }

  .dock__group {
    display: flex;
    gap: 8px;
    margin-right: 16px;
  }

  .dock__group--wide {
    gap: 16px;
    margin-right: 8px;
  }

  .dock__btn {
    display: grid;
    place-items: center;
    width: 64px;
    height: 64px;
    border-radius: 16px;
    color: var(--muted);
  }

  .dock__btn--active {
    background: #777;
    color: #fff;
  }

  .dock__zoom {
    display: flex;
    align-items: center;
    height: 48px;
    padding: 0 32px;
    border: solid var(--rule);
    border-width: 0 2px;
  }

  .dock__zoom button {
    display: flex;
    align-items: center;
    gap: 14px;
  }

  .dock__upgrade {
    padding-left: 16px;
    color: #68cbf0;
    font-weight: 700;
  }

  /* right panel */
  .props {
    border-bottom-right-radius: 14px;
    background: var(--panel);
  }

  .props__title {
    display: flex;
    align-items: center;
    justify-content: space-between;
    height: 128px;
    padding: 0 38px 0 32px;
  }

  .props__title h2 {
    font-size: 32px;
  }

  .props__title button {
    color: var(--muted);
  }

  .tabs {
    display: flex;
    gap: 32px;
    padding: 0 32px;
    border-bottom: 2px solid var(--rule);
    font-size: 28px;
    font-weight: 600;
  }

  .tabs__tab {
    height: 66px;
    padding-bottom: 18px;
    border-bottom: 4px solid transparent;
    color: var(--muted);
  }

  .tabs__tab--active {
    border-color: #fff;
    color: #fff;
  }

  .aligns {
    display: flex;
    align-items: center;
    justify-content: space-between;
    height: 82px;
    padding: 0 30px 0 44px;
    border-bottom: 2px solid var(--rule);
    color: #777;
  }

  .group {
    padding: 0 30px 32px 32px;
    border-bottom: 2px solid var(--rule);
  }

  .group:last-child {
    border: 0;
  }

  .group__head {
    display: flex;
    align-items: center;
    justify-content: space-between;
    height: 80px;
    padding-right: 16px;
    font-weight: 700;
  }

  .segmented {
    display: flex;
    gap: 4px;
    height: 64px;
    padding: 4px;
    border-radius: 16px;
    background: var(--raised);
  }

  .segmented__opt {
    flex: 1;
    border-radius: 12px;
    color: var(--muted);
  }

  .segmented__opt--active {
    background: #777;
    color: #fff;
  }

  .content-head {
    display: flex;
    align-items: center;
    justify-content: space-between;
    margin: 32px 0 12px;
    height: 48px;
    padding-right: 8px;
  }

  .content-head__expand {
    display: flex;
    align-items: center;
    gap: 10px;
    color: var(--muted);
  }

  .binding {
    display: flex;
    align-items: center;
    gap: 32px;
    padding: 8px 30px 8px 20px;
    border-radius: 16px;
    background: var(--raised);
  }

  .binding__text {
    flex: 1;
    min-width: 0;
    color: var(--blue);
    line-height: 48px;
    white-space: pre;
  }

  .rows {
    display: flex;
    flex-direction: column;
    gap: 32px;
  }

  .rows--tight {
    gap: 24px;
  }

  .binding + .rows {
    margin: 32px 0 -8px;
  }

  .row {
    display: flex;
    align-items: center;
    justify-content: space-between;
    height: 64px;
  }

  .row--margin {
    height: 56px;
    margin-top: 28px;
  }

  .tool--end {
    margin-right: 12px;
  }

  .tool--range {
    margin-right: 36px;
    margin-left: auto;
  }

  .switch {
    display: flex;
    width: 64px;
    height: 32px;
    padding: 4px;
    border-radius: 16px;
    background: #5a5a5a;
    appearance: none;
  }

  .switch::before {
    content: "";
    width: 24px;
    height: 24px;
    border-radius: 50%;
    background: #fff;
  }

  .switch:checked {
    justify-content: flex-end;
    background: var(--blue);
  }

  .select,
  .input {
    width: 220px;
    height: 64px;
    border-radius: 16px;
    background: var(--raised);
  }

  .input {
    padding: 0 18px;
  }

  .input::placeholder {
    color: var(--muted);
    opacity: 1;
  }

  .select {
    display: grid;
    grid-template-columns: 1fr;
    align-items: center;
    color: var(--muted);
  }

  .select select,
  .select :global(svg) {
    grid-area: 1 / 1;
  }

  .select select {
    height: 100%;
    padding: 0 24px;
    color: #fff;
    appearance: none;
  }

  .select :global(svg) {
    justify-self: end;
    margin-right: 24px;
    pointer-events: none;
  }

  .select--fit {
    background: #525252;
  }

  .select--fit select {
    padding-right: 62px;
    text-align: right;
    text-align-last: right;
  }
</style>
